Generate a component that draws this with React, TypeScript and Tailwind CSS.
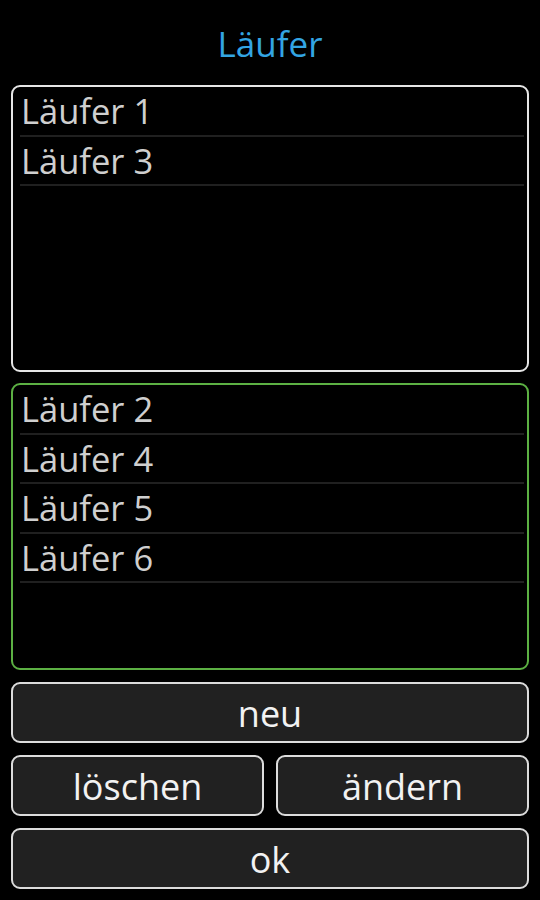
const top = ['Läufer 1', 'Läufer 3']
const bottom = ['Läufer 2', 'Läufer 4', 'Läufer 5', 'Läufer 6']

function RunnerList({ names, tone }: { names: string[]; tone: 'white' | 'green' }) {
  return (
    <div
      className={
        'h-[287px] rounded-[9px] border-2 bg-black pl-[7px] pr-[3px] ' +
        (tone === 'white' ? 'border-[#e6e6e6]' : 'border-[#5cb043]')
      }
    >
      <ul className="flex flex-col">
        {names.map((n) => (
          <li
            key={n}
            className="flex h-[49.5px] items-center border-b-2 border-[#202020] pl-[1px] pt-[1px] text-[34.5px] leading-none text-[#cfcfcf]"
          >
            {n}
          </li>
        ))}
      </ul>
    </div>
  )
}

function Btn({ label }: { label: string }) {
  return (
    <button
      type="button"
      className="flex h-[61px] w-full items-center justify-center rounded-[9px] border-2 border-[#dcdcdc] bg-[#212121] pt-[3px] text-[36px] leading-none text-[#f2f2f2]"
    >
      {label}
    </button>
  )
}

export default function App() {
  return (
    <div
      className="flex h-[900px] w-[540px] flex-col bg-black px-[11px]"
      style={{ fontFamily: '"Open Sans", "DejaVu Sans", sans-serif' }}
    >
      <div className="flex h-[85px] items-center justify-center pt-[2px]">
        <h1 className="text-[35px] leading-none text-[#33a5e3]">Läufer</h1>
      </div>
      <div className="flex flex-col gap-[11px]">
        <RunnerList names={top} tone="white" />
        <RunnerList names={bottom} tone="green" />
      </div>
      <div className="mt-[12px] flex flex-col gap-[12px]">
        <Btn label="neu" />
        <div className="grid grid-cols-2 gap-[12px]">
          <Btn label="löschen" />
          <Btn label="ändern" />
        </div>
        <Btn label="ok" />
      </div>
    </div>
  )
}
